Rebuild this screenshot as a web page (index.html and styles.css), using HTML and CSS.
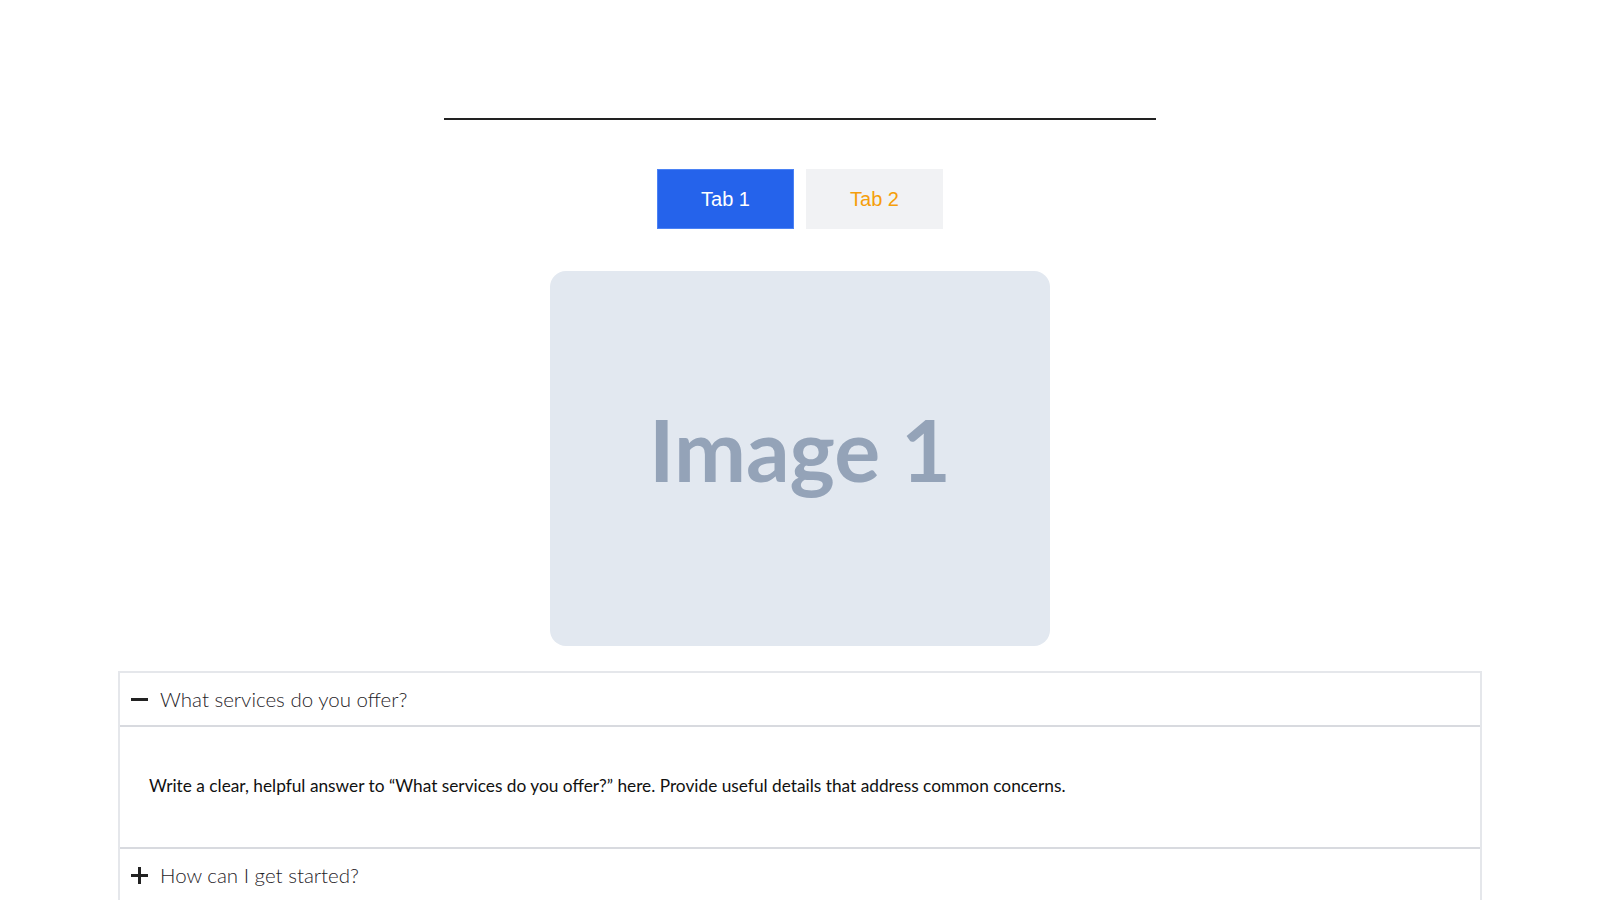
FILE: index.html
```html
<html>
  <head>
    <title>Tabs and FAQ</title>
    <link rel="stylesheet" href="styles.css">
  </head>
  <body>
    <div id="content">
      <div class="divider"></div>

      <div class="tabs">
        <button class="tab active">Tab 1</button>
        <button class="tab">Tab 2</button>
      </div>

      <div class="panel">
        <span class="panel-label">Image 1</span>
      </div>

      <div class="faq">
        <div class="faq-item open">
          <div class="faq-question">
            <span class="faq-icon minus"></span>
            <span>What services do you offer?</span>
          </div>
          <div class="faq-answer">
            <p>Write a clear, helpful answer to &ldquo;What services do you offer?&rdquo; here. Provide useful details that address common concerns.</p>
          </div>
        </div>
        <div class="faq-item">
          <div class="faq-question">
            <span class="faq-icon plus"></span>
            <span>How can I get started?</span>
          </div>
        </div>
      </div>
    </div>
  </body>
</html>
```

FILE: styles.css
```css
body {
    margin: 0;
    background: #fff;
    font-family: "Liberation Sans", Arial, sans-serif;
}
#content {
    padding-top: 118px;
}
.divider {
    width: 712px;
    height: 2px;
    margin: 0 auto;
    background: #222;
}
.tabs {
    display: flex;
    justify-content: center;
    gap: 12px;
    margin-top: 49px;
}
.tab {
    width: 137px;
    height: 60px;
    border: 1px solid #f1f2f4;
    background: #f1f2f4;
    color: #f59e0b;
    font-family: "Liberation Sans", Arial, sans-serif;
    font-size: 20px;
    padding: 0;
}
.tab.active {
    background: #2563eb;
    border-color: #4b82f5;
    color: #fff;
}
.panel {
    width: 500px;
    height: 375px;
    box-sizing: border-box;
    padding-bottom: 20px;
    margin: 42px auto 0;
    background: #e2e8f0;
    border-radius: 16px;
    display: flex;
    align-items: center;
    justify-content: center;
}
.panel-label {
    font-family: Lato, sans-serif;
    font-weight: bold;
    font-size: 86px;
    color: #94a3b8;
}
.faq {
    margin: 25px 118px 0;
    border: 2px solid #e5e7eb;
    border-bottom: none;
}
.faq-item {
    border-bottom: 2px solid #d8dadf;
}
.faq-question {
    height: 52px;
    display: flex;
    align-items: center;
    padding-left: 11px;
    font-family: Lato, sans-serif;
    font-weight: 300;
    font-size: 20.5px;
    color: #1f2328;
}
.open .faq-question {
    border-bottom: 2px solid #d8dadf;
}
.faq-icon {
    position: relative;
    width: 17px;
    height: 17px;
    margin-right: 12px;
}
.faq-icon::before, .plus::after {
    content: "";
    position: absolute;
    left: 0;
    top: 7px;
    width: 17px;
    height: 3px;
    background: #222;
}
.plus::after {
    left: 7px;
    top: 0;
    width: 3px;
    height: 17px;
}
.faq-answer {
    padding: 45px 29px 47px;
}
.faq-answer p {
    margin: 0;
    line-height: 28px;
    font-family: Lato, sans-serif;
    font-size: 17.3px;
    color: #111;
}
```
